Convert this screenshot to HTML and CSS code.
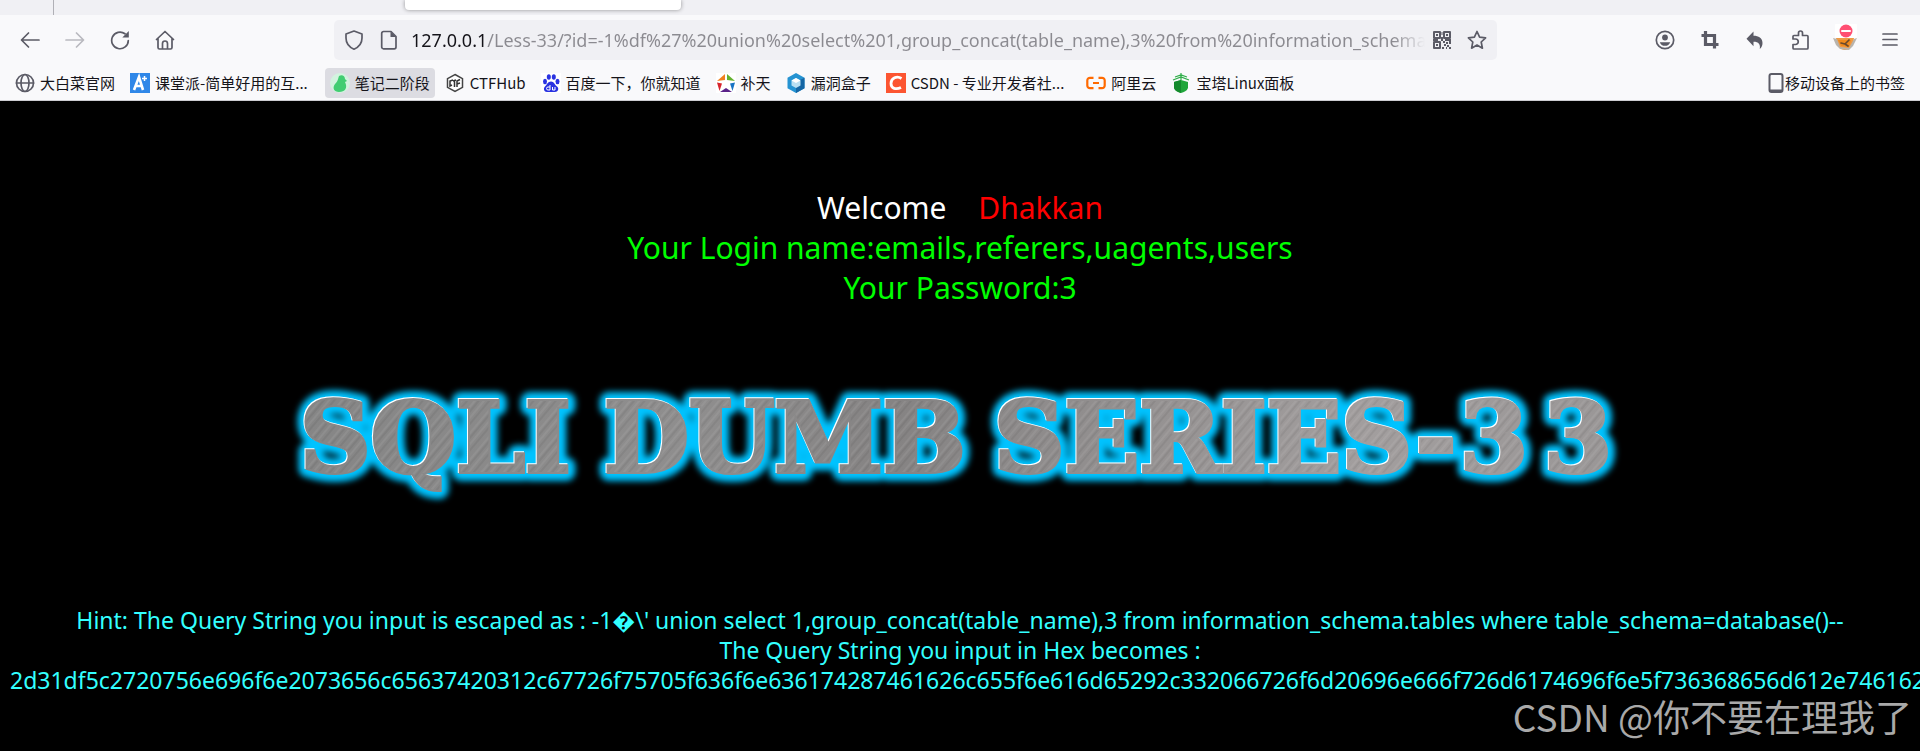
FILE: index.html
```html
<!DOCTYPE html>
<html lang="zh-CN">

<head>
    <meta charset="UTF-8" />
    <meta name="viewport" content="width=device-width, initial-scale=1.0" />
    <title>Less-33 Bypass addslashes()</title>
    <link rel="stylesheet" href="styles.css">
</head>

<body>
    <header class="browser">
        <div class="tab-strip">
            <div class="tab-separator"></div>
            <div class="tab-preview"></div>
        </div>

        <div class="toolbar">
            <nav class="nav-buttons">
                <button class="icon-btn" aria-label="后退">
                    <svg viewBox="0 0 20 20"><path d="M19 10H2M8.500 3L1.500 10l7 7" /></svg>
                </button>
                <button class="icon-btn" aria-label="前进" disabled>
                    <svg viewBox="0 0 20 20"><path d="M1 10h17M11.500 3l7 7-7 7" /></svg>
                </button>
                <button class="icon-btn" aria-label="刷新">
                    <svg viewBox="0 0 20 20"><path d="M18.300 10.500A8.300 8.300 0 1 1 15 3.800" /><path class="solid" d="M18.800 1v6.500h-6.500z" /></svg>
                </button>
                <button class="icon-btn" aria-label="主页">
                    <svg viewBox="0 0 20 20"><path d="M1.500 9.500L10 1.500l8.500 8M3 8.500v9a1.500 1.500 0 0 0 1.500 1.500h11a1.500 1.500 0 0 0 1.500-1.500v-9M7.500 19v-5.500a2.500 2.500 0 0 1 5 0V19" /></svg>
                </button>
            </nav>

            <div class="url-bar">
                <svg class="icon" viewBox="0 0 20 20"><path d="M10 1l8 3v4c0 5-3 9-8 11.200C5 17 2 13 2 8V4z" /></svg>
                <svg class="icon" viewBox="0 0 20 20"><path d="M4.500 1.500H12l5 5V17a1.800 1.800 0 0 1-1.800 1.800H4.500A1.800 1.800 0 0 1 2.700 17V3.300a1.800 1.800 0 0 1 1.800-1.800z" /><path class="solid" d="M11.500 1.500v5.500H17z" /></svg>
                <input class="url" type="text" aria-label="地址" value="127.0.0.1/Less-33/?id=-1%df%27%20union%20select%201,group_concat(table_name),3%20from%20information_schema.tables%20where%20table_schema=database()--+">
                <button class="icon-btn" aria-label="二维码">
                    <svg class="qr" viewBox="0 0 20 20"><path d="M2 2h6v6H2zM12 2h6v6h-6zM2 12h6v6H2z" /><path class="solid" d="M4 4h2v2H4zM14 4h2v2h-2zM4 14h2v2H4zM9.500 2h1v3h-1zM9 7h2v4H9zM1 9h5v2H1zM13 9h6v2h-6zM11 11h2v2h-2zM14 12h2v2h-2zM17 11h2v3h-2zM12 14h2v2h-2zM15 15h2v2h-2zM10 17h2v2h-2zM14 17h1v2h-1zM17 17h2v2h-2z" /></svg>
                </button>
                <button class="icon-btn" aria-label="为此页添加书签">
                    <svg viewBox="0 0 20 20"><path d="M10 1.500l2.600 5.600 6 .700-4.400 4.200 1.200 6.200L10 15.100l-5.400 3.100L5.800 12 1.400 7.800l6-.700z" /></svg>
                </button>
            </div>

            <div class="tools">
                <button class="icon-btn" aria-label="账户">
                    <svg viewBox="0 0 20 20"><circle cx="10" cy="10" r="8.700" /><circle class="solid" cx="10" cy="7.500" r="2.900" /><path class="solid" d="M4.800 12.200h10.400c-.8 2.500-2.700 3.600-5.200 3.600s-4.400-1.100-5.200-3.600z" /></svg>
                </button>
                <button class="icon-btn" aria-label="截图">
                    <svg class="heavy" viewBox="0 0 20 20"><path d="M1.500 5.500h13v13M5.500 1v13.500h13" /></svg>
                </button>
                <button class="icon-btn" aria-label="撤销">
                    <svg viewBox="0 0 20 20"><path class="solid" d="M8.500 1.500v4.300c5 0 9 2 9 7.200 0 2.500-.8 4.200-2.700 6 .8-4.500-1-7.200-6.300-7.200v4.400L1.500 8.800z" /></svg>
                </button>
                <button class="icon-btn" aria-label="扩展">
                    <svg viewBox="0 0 20 20"><path d="M3 9V6.500A1 1 0 0 1 4 5.500h4.500V3a2 2 0 0 1 4 0v2.500H17a1 1 0 0 1 1 1V18a1 1 0 0 1-1 1H4a1 1 0 0 1-1-1v-3.500h2.500a2 2 0 0 0 0-5.500z" /></svg>
                </button>
                <button class="icon-btn" aria-label="代理">
                    <svg class="fox" viewBox="0 0 24 28">
                        <path d="M3 14c1 8 4 12 9 12s8-4 9-12z" fill="#ef9a45" />
                        <path d="M0 14l4 1 3 8 9 1 5-9 3-1-4 8-4 4-9-1-4-4z" fill="#b9b4ac" />
                        <path d="M5 16h13l-2 7-8-1z" fill="#f08a1c" />
                        <path d="M8 19l4 1 4-4M12 20l3 2" stroke="#6b4a2c" fill="none" />
                        <rect x="2" width="22" height="14" rx="1" fill="#fff" />
                        <circle cx="13" cy="7" r="6.500" fill="#ff4f72" />
                        <path d="M9 7h8" stroke="#fff" stroke-width="2" />
                    </svg>
                </button>
                <button class="icon-btn" aria-label="菜单">
                    <svg viewBox="0 0 20 20"><path d="M3 4h14M3 9.500h14M3 15h14" /></svg>
                </button>
            </div>
        </div>

        <nav class="bookmarks">
            <a href="#">
                <svg class="icon" viewBox="0 0 20 20"><circle cx="10" cy="10" r="8.500" /><ellipse cx="10" cy="10" rx="4" ry="8.500" /><path d="M1.500 10h17" /></svg>
                大白菜官网
            </a>
            <a class="clipped" href="#">
                <svg viewBox="0 0 20 20"><rect width="20" height="20" fill="#2f87e8" /><path d="M4 17L9 4l4 13M5.500 13h6" fill="none" stroke="#fff" stroke-width="2.600" /><path d="M14.500 3v5M12 5.500h5" stroke="#fff" stroke-width="1.500" /></svg>
                课堂派-简单好用的互...
            </a>
            <a class="active" href="#">
                <svg viewBox="0 0 20 20"><circle cx="10" cy="10" r="10" fill="#d3f3df" /><path d="M9 3c3-2 6 0 6 3l2 2-2 1c3 6 0 10-6 10-5 0-7-4-4-8 3-3 3-5 4-8z" fill="#42cd72" /></svg>
                笔记二阶段
            </a>
            <a href="#">
                <svg viewBox="0 0 20 20"><path d="M10 1.500l7.500 4.200v8.600L10 18.500l-7.500-4.200V5.700z" fill="#fff" stroke="#444" stroke-width="1.500" /><path d="M8 7L5 8v5l2-1M8 8l3-1M9.500 8v6M12 14V8l3-1.500M12 11l3-1" fill="none" stroke="#333" stroke-width="1.500" /></svg>
                CTFHub
            </a>
            <a href="#">
                <svg viewBox="0 0 20 20"><rect width="20" height="20" fill="#fff" /><g fill="#2932e1"><ellipse cx="4" cy="8.500" rx="2" ry="2.700" /><ellipse cx="7.800" cy="4" rx="2" ry="2.800" /><ellipse cx="12.800" cy="4" rx="2" ry="2.800" /><ellipse cx="16.500" cy="8.500" rx="2" ry="2.700" /><path d="M10 8.500c3 0 3.500 3 6 5s1 5.500-2 5.500H6c-3 0-4-3.500-2-5.500s3-5 6-5z" /></g><path d="M9 12v5H7a1.500 1.500 0 0 1 0-3h2M11.500 14v3H14v-3" fill="none" stroke="#fff" /></svg>
                百度一下，你就知道
            </a>
            <a href="#">
                <svg viewBox="0 0 20 20"><rect width="20" height="20" fill="#fff" /><path d="M9 1v6l-8 1z" fill="#f08020" /><path d="M11 1l8 7-8-1z" fill="#63b22f" /><path d="M1 9.500l5 1L3.500 18z" fill="#d7242c" /><path d="M19 9.500l-5 1 2.500 7.500z" fill="#1672c4" /><path d="M4 19l6-4 6 4z" fill="#5a2289" /></svg>
                补天
            </a>
            <a href="#">
                <svg viewBox="0 0 20 20"><path d="M10 0l8.500 4.800v10.400L10 20l-8.500-4.800V4.800z" fill="#2593d2" /><path d="M18.500 4.800v10.400L10 20v-6l4-2V7z" fill="#1666a4" /><path d="M10 5l4.500 2.500v5L10 15l-4.500-2.500v-5z" fill="#b9dff2" /><path d="M10 5l4.500 2.500L10 10 5.500 7.500z" fill="#fff" /></svg>
                漏洞盒子
            </a>
            <a class="clipped" href="#">
                <svg viewBox="0 0 20 20"><rect width="20" height="20" fill="#fc5531" /><path d="M15.500 5.500C11 2.500 5 5 5 10.500c0 5 5 6.500 10 4" fill="none" stroke="#fff" stroke-width="2.800" /></svg>
                CSDN - 专业开发者社...
            </a>
            <a href="#">
                <svg viewBox="0 0 20 20"><path d="M7.500 4.800H4A2.700 2.700 0 0 0 1.300 7.500v5A2.700 2.700 0 0 0 4 15.200h3.500M12.500 4.800H16a2.700 2.700 0 0 1 2.700 2.700v5a2.700 2.700 0 0 1-2.700 2.700h-3.500M7 10h6" fill="none" stroke="#ff6a00" stroke-width="2.200" /></svg>
                阿里云
            </a>
            <a href="#">
                <svg viewBox="0 0 20 20"><path d="M3 9l7-2 7 2v6c-1 3-4 4-7 5-3-1-6-2-7-5z" fill="#20a53a" /><path d="M3 9l7-2v13c-3-1-6-2-7-5z" fill="#148a2c" /><path d="M2 7l8-3 8 3M4 4l6-2 6 2M10 0v7" fill="none" stroke="#2fae49" stroke-width="1.200" /></svg>
                宝塔Linux面板
            </a>
            <a class="mobile" href="#">
                <svg class="icon phone" viewBox="0 0 16 20"><rect x="1.500" y="1" width="13" height="18" rx="2" /><path d="M2 17.500h12" /></svg>
                移动设备上的书签
            </a>
        </nav>
    </header>

    <main>
        <section class="result">
            <p class="welcome">Welcome <span>Dhakkan</span></p>
            <p>Your Login name:emails,referers,uagents,users</p>
            <p>Your Password:3</p>
        </section>

        <svg class="banner" viewBox="0 0 1340 120" role="img" aria-label="SQLI DUMB SERIES-33">
            <defs>
                <linearGradient id="metal" gradientUnits="userSpaceOnUse" x1="0" y1="0" x2="1340" y2="100">
                    <stop offset="0" stop-color="#858585" />
                    <stop offset="0.3" stop-color="#8f8e8e" />
                    <stop offset="0.45" stop-color="#858383" />
                    <stop offset="0.8" stop-color="#a29e9e" />
                    <stop offset="1" stop-color="#999696" />
                </linearGradient>
                <pattern id="brushed" width="17" height="40" patternUnits="userSpaceOnUse" patternTransform="rotate(40)">
                    <path d="M2 0v40M9 0v40" stroke="#fff" stroke-opacity="0.12" />
                    <path d="M5 0v40M13 0v40" stroke="#000" stroke-opacity="0.06" stroke-width="2" />
                </pattern>
                <filter id="glow" x="-5%" y="-30%" width="110%" height="160%">
                    <feGaussianBlur stdDeviation="3" />
                </filter>
                <g id="words">
                    <text x="10" y="92">SQLI</text>
                    <text x="314" y="92">DUMB</text>
                    <text x="704" y="92">SERIES-</text>
                    <text x="1170" y="92">3</text>
                    <text x="1254" y="92">3</text>
                </g>
            </defs>
            <use class="halo" href="#words" filter="url(#glow)" />
            <use class="edge" href="#words" x="-1" y="-1" />
            <use class="metal" href="#words" />
            <use class="brushed" href="#words" />
        </svg>

        <section class="hint">
            <p>Hint: The Query String you input is escaped as : -1&#xFFFD;\' union select 1,group_concat(table_name),3 from information_schema.tables where table_schema=database()--</p>
            <p>The Query String you input in Hex becomes :</p>
            <p class="hex">2d31df5c2720756e696f6e2073656c65637420312c67726f75705f636f6e636174287461626c655f6e616d65292c332066726f6d20696e666f726d6174696f6e5f736368656d612e7461626c6573207768657265207461626c655f736368656d613d646174616261736528292d2d20</p>
        </section>
        <div class="watermark">CSDN @你不要在理我了</div>
    </main>
</body>

</html>
```
FILE: styles.css
```css
* {
    margin: 0;
    padding: 0;
    box-sizing: border-box;
}

body {
    display: flex;
    flex-direction: column;
    min-height: 100vh;
    background: #000;
    font-family: "Noto Sans", "Noto Sans CJK SC", sans-serif;
    overflow: hidden;
}

button {
    border: none;
    background: none;
}

/* browser chrome */
.browser {
    background: #f9f9fb;
    border-bottom: 1px solid #ccccd1;
    color: #15141a;
}

.tab-strip {
    display: flex;
    height: 15px;
    background: #f0f0f4;
}

.tab-separator {
    width: 54px;
    border-right: 1px solid #b0b0b6;
}

.tab-preview {
    width: 276px;
    height: 10px;
    margin-left: 351px;
    background: #fff;
    border-radius: 0 0 4px 4px;
    box-shadow: 0 0 4px rgba(0, 0, 0, 0.4);
}

.toolbar {
    display: flex;
    align-items: center;
    height: 50px;
    padding: 0 20px;
}

.nav-buttons,
.tools {
    display: flex;
    gap: 25px;
}

.icon-btn {
    width: 20px;
    height: 20px;
}

.icon-btn svg,
.icon {
    display: block;
    width: 20px;
    height: 20px;
    fill: none;
    stroke: #5b5b66;
    stroke-width: 1.7;
    stroke-linejoin: round;
    stroke-linecap: round;
}

.icon-btn:disabled {
    opacity: 0.4;
}

.icon-btn .solid,
.icon .solid {
    fill: #5b5b66;
    stroke: none;
}

.icon-btn .heavy {
    stroke-width: 3.2;
    stroke-linecap: butt;
    stroke-linejoin: miter;
}

.icon-btn .qr {
    stroke-width: 2;
}

.icon-btn .fox {
    width: 24px;
    height: 28px;
    margin: -6px 0 0 -2px;
    stroke: none;
}

.url-bar {
    display: flex;
    flex: 1;
    align-items: center;
    gap: 15px;
    height: 40px;
    margin: 0 158px 0 159px;
    padding: 0 10px;
    background: #f0f0f4;
    border-radius: 5px;
}

.url {
    flex: 1;
    min-width: 0;
    margin: 0 -8px 0 -3px;
    border: none;
    outline: none;
    font: 18px "Noto Sans", sans-serif;
    color: transparent;
    background: linear-gradient(to right, #15141a 76px, #8b8a90 76px);
    -webkit-background-clip: text;
    background-clip: text;
    -webkit-mask-image: linear-gradient(to left, transparent, #000 32px);
    mask-image: linear-gradient(to left, transparent, #000 32px);
}

.bookmarks {
    display: flex;
    gap: 5px;
    padding: 3px 10px 2px;
    font-family: "Noto Sans CJK SC", sans-serif;
    font-size: 15px;
    line-height: 30px;
    white-space: nowrap;
}

.bookmarks a {
    display: flex;
    align-items: center;
    gap: 5px;
    padding: 0 5px;
    border-radius: 4px;
    color: #15141a;
    text-decoration: none;
}

.bookmarks svg {
    width: 20px;
    height: 20px;
}

.bookmarks .clipped {
    padding-right: 12px;
}

.bookmarks .active {
    background: #dcdce2;
}

.bookmarks .mobile {
    gap: 1px;
    margin-left: auto;
}

.bookmarks .phone {
    width: 16px;
    stroke-width: 2;
}

/* page */
main {
    position: relative;
    flex: 1;
    padding: 87px 10px 0;
}

.result {
    color: #0f0;
    font-size: 30px;
    line-height: 40px;
    text-align: center;
}

.welcome {
    color: #fff;
}

.welcome span {
    margin-left: 24px;
    color: #f00;
}

.banner {
    display: block;
    width: 1340px;
    max-width: 100%;
    margin: 72px auto 105px;
    overflow: visible;
    font-family: "DejaVu Serif", serif;
    font-size: 98px;
    font-weight: bold;
}

.halo {
    fill: #00c3ff;
    stroke: #00c3ff;
    stroke-width: 18;
    stroke-linejoin: round;
}

.edge {
    fill: #fff;
    stroke: #fff;
    stroke-width: 4;
}

.metal {
    fill: url(#metal);
    stroke: url(#metal);
    stroke-width: 4;
}

.brushed {
    fill: url(#brushed);
}

.hint {
    color: #3ff;
    font-size: 23px;
    line-height: 30px;
    text-align: center;
}

.hint p {
    white-space: nowrap;
}

.hint .hex {
    text-align: left;
}

.watermark {
    position: absolute;
    right: 8px;
    bottom: 8px;
    color: #a9a9a9;
    font-family: "Noto Sans CJK SC", sans-serif;
    font-size: 37px;
    line-height: 54px;
}
```
